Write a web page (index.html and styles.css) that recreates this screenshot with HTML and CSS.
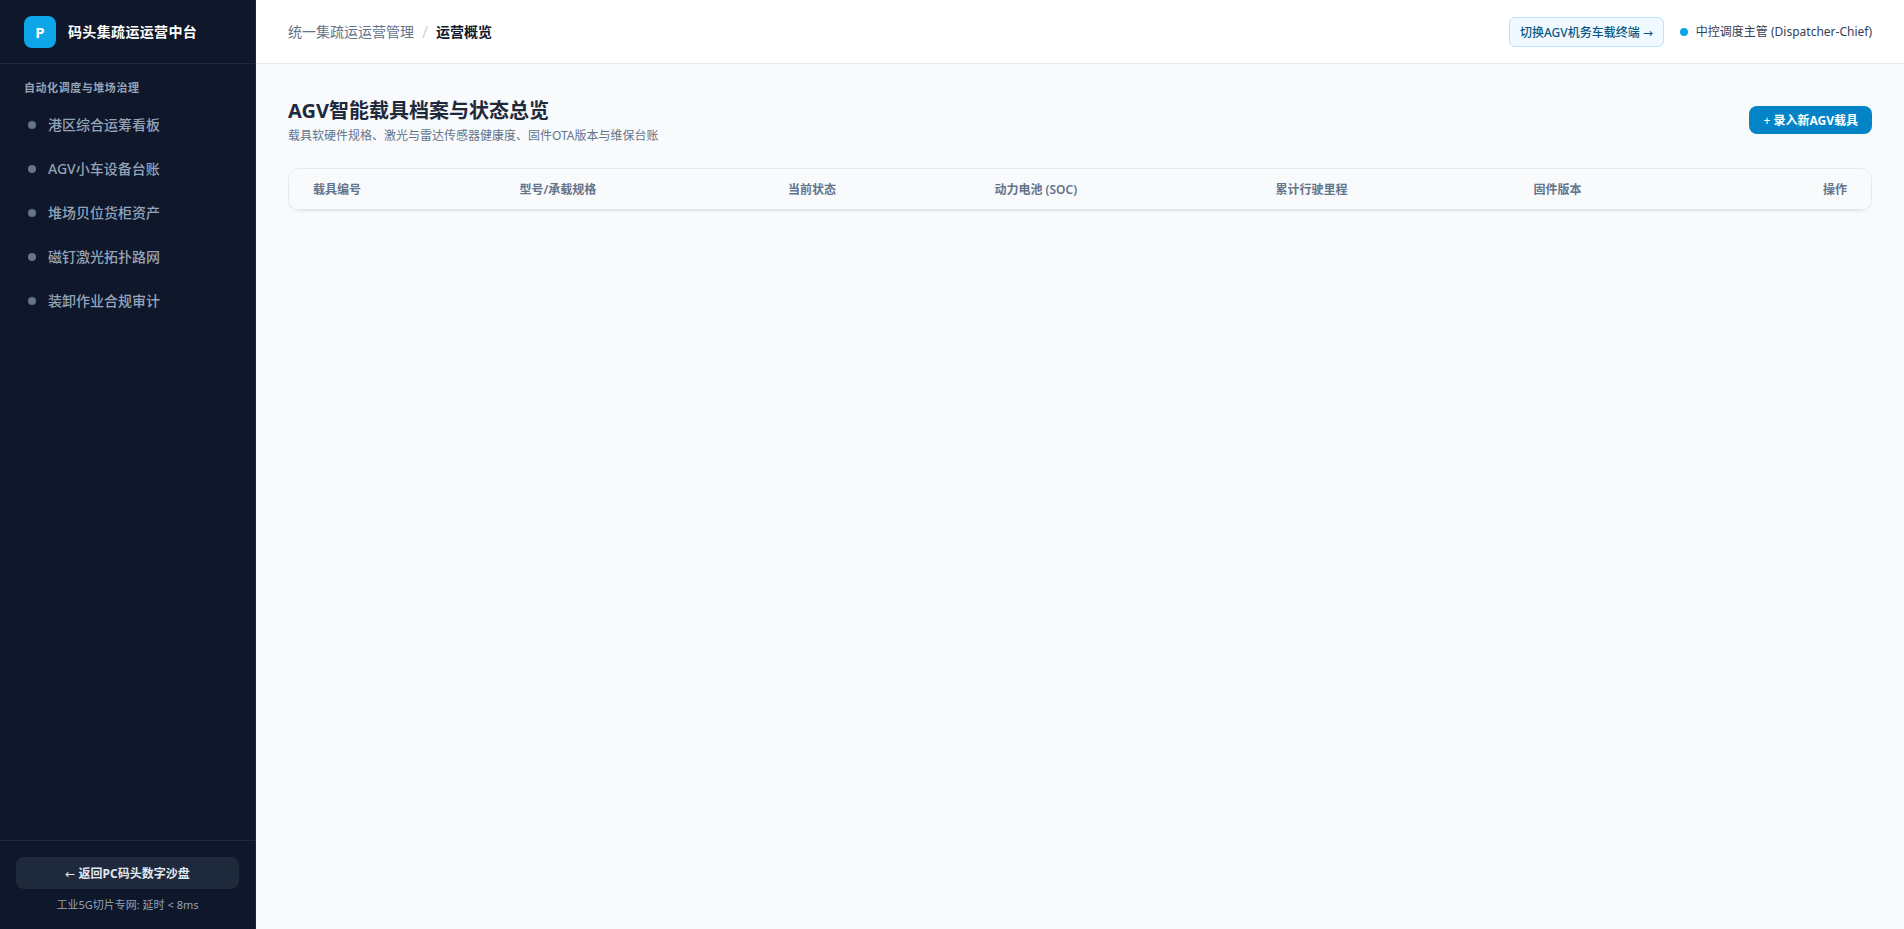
FILE: index.html
```html
<!DOCTYPE html>
<html lang="zh-CN">
<head>
<meta charset="utf-8">
<meta name="viewport" content="width=device-width, initial-scale=1">
<title>码头集疏运运营中台</title>
<link rel="stylesheet" href="styles.css">
</head>
<body>
<div class="app">
  <aside class="sidebar">
    <div class="brand">
      <span class="brand-mark">P</span>
      <span class="brand-name">码头集疏运运营中台</span>
    </div>
    <nav class="nav" aria-labelledby="nav-title">
      <h2 class="nav-title" id="nav-title">自动化调度与堆场治理</h2>
      <ul class="nav-list">
        <li><a class="nav-link" href="#board"><span class="nav-dot"></span>港区综合运筹看板</a></li>
        <li><a class="nav-link" href="#agv"><span class="nav-dot"></span>AGV小车设备台账</a></li>
        <li><a class="nav-link" href="#yard"><span class="nav-dot"></span>堆场贝位货柜资产</a></li>
        <li><a class="nav-link" href="#network"><span class="nav-dot"></span>磁钉激光拓扑路网</a></li>
        <li><a class="nav-link" href="#audit"><span class="nav-dot"></span>装卸作业合规审计</a></li>
      </ul>
    </nav>
    <div class="sidebar-foot">
      <button class="back-button" type="button"><span class="symbol">←</span> 返回PC码头数字沙盘</button>
      <p class="net-status">工业5G切片专网: 延时 &lt; 8ms</p>
    </div>
  </aside>
  <div class="content">
    <header class="topbar">
      <nav class="crumbs" aria-label="面包屑">
        <span>统一集疏运运营管理</span>
        <span class="crumb-sep">/</span>
        <span class="crumb-current">运营概览</span>
      </nav>
      <div class="topbar-side">
        <button class="switch-button" type="button">切换AGV机务车载终端 <span class="symbol">→</span></button>
        <div class="user"><span class="user-dot"></span>中控调度主管 (Dispatcher-Chief)</div>
      </div>
    </header>
    <main class="main">
      <div class="page-head">
        <div>
          <h1 class="page-title">AGV智能载具档案与状态总览</h1>
          <p class="page-note">载具软硬件规格、激光与雷达传感器健康度、固件OTA版本与维保台账</p>
        </div>
        <button class="primary-button" type="button"><span class="plus">+</span> 录入新AGV载具</button>
      </div>
      <div class="card">
        <table class="table">
          <thead>
            <tr>
              <th scope="col">载具编号</th>
              <th scope="col">型号/承载规格</th>
              <th scope="col">当前状态</th>
              <th scope="col">动力电池 (SOC)</th>
              <th scope="col">累计行驶里程</th>
              <th scope="col">固件版本</th>
              <th scope="col" class="align-end">操作</th>
            </tr>
          </thead>
          <tbody></tbody>
        </table>
      </div>
    </main>
  </div>
</div>
</body>
</html>
```
FILE: styles.css
```css
*, *::before, *::after { box-sizing: border-box; }
body, h1, h2, p, ul { margin: 0; padding: 0; }
body {
  font-family: "Noto Sans", "Noto Sans CJK SC", sans-serif;
  font-size: 14px;
  line-height: 20px;
  color: #1e293b;
  background: #f8fafc;
}
button { font: inherit; border: 0; cursor: pointer; white-space: nowrap; }
a { color: inherit; text-decoration: none; }
ul { list-style: none; }
.symbol { font-family: "DejaVu Sans", sans-serif; font-weight: 400; line-height: 1; }
.plus { font-weight: 500; }

.app { display: flex; height: 100vh; overflow: hidden; }

.sidebar {
  display: flex;
  flex-direction: column;
  flex: none;
  width: 256px;
  color: #94a3b8;
  background: #0f172a;
  border-right: 1px solid #1e293b;
}
.brand {
  display: flex;
  align-items: center;
  gap: 12px;
  height: 64px;
  padding: 0 24px;
  border-bottom: 1px solid #1e293b;
}
.brand-mark {
  display: grid;
  place-items: center;
  width: 32px;
  height: 32px;
  border-radius: 8px;
  color: #fff;
  background: #0ea5e9;
  font-size: 15px;
  font-weight: 700;
}
.brand-name { color: #fff; font-weight: 700; letter-spacing: 0.025em; }

.nav { flex: 1; padding: 16px 12px; overflow-y: auto; }
.nav-title {
  margin-bottom: 9px;
  padding: 0 12px;
  font-size: 11px;
  line-height: 16px;
  font-weight: 700;
  letter-spacing: 0.05em;
}
.nav-list { display: grid; gap: 4px; }
.nav-link {
  display: flex;
  align-items: center;
  gap: 12px;
  padding: 10px 16px;
  border-radius: 8px;
  font-weight: 500;
}
.nav-dot { width: 8px; height: 8px; border-radius: 50%; background: #64748b; }

.sidebar-foot {
  display: grid;
  gap: 8px;
  padding: 16px;
  border-top: 1px solid #1e293b;
  text-align: center;
}
.back-button {
  padding: 9px 8px 7px;
  border-radius: 8px;
  color: #e2e8f0;
  background: #1e293b;
  font-size: 12px;
  line-height: 16px;
  font-weight: 700;
}
.net-status { font-size: 11px; line-height: 16px; }

.content { display: flex; flex-direction: column; flex: 1; min-width: 0; }
.topbar {
  display: flex;
  align-items: center;
  justify-content: space-between;
  height: 64px;
  padding: 0 32px;
  background: #fff;
  border-bottom: 1px solid #e2e8f0;
}
.crumbs { display: flex; gap: 8px; color: #64748b; }
.crumb-sep { color: #cbd5e1; font-size: 16px; }
.crumb-current { color: #0f172a; font-weight: 600; }
.topbar-side { display: flex; align-items: center; gap: 16px; font-size: 12px; line-height: 16px; }
.switch-button {
  padding: 7px 10px 5px;
  border: 1px solid #bae6fd;
  border-radius: 6px;
  color: #075985;
  background: #f0f9ff;
  font-weight: 500;
}
.user { display: flex; align-items: center; gap: 8px; color: #334155; }
.user-dot { width: 8px; height: 8px; border-radius: 50%; background: #0ea5e9; }

.main { flex: 1; padding: 32px; overflow-y: auto; }
.page-head {
  display: flex;
  align-items: center;
  justify-content: space-between;
  margin-bottom: 24px;
}
.page-title { font-size: 20px; line-height: 30px; font-weight: 700; }
.page-note { margin-top: 2px; color: #64748b; font-size: 12px; line-height: 16px; }
.primary-button {
  padding: 7px 14px 5px;
  border-radius: 8px;
  color: #fff;
  background: #0284c7;
  font-size: 12px;
  line-height: 16px;
  font-weight: 700;
}

.card {
  overflow: hidden;
  background: #fff;
  border: 1px solid #e2e8f0;
  border-radius: 12px;
  box-shadow: 0 1px 2px rgba(0, 0, 0, 0.05);
}
.table { width: 100%; border-collapse: collapse; font-size: 12px; line-height: 16px; text-align: left; }
.table thead { background: #f8fafc; }
.table tr { border-bottom: 1px solid #e2e8f0; }
.table th { padding: 13px 24px 11px; color: #64748b; font-weight: 600; }
.table .align-end { text-align: right; }
```
